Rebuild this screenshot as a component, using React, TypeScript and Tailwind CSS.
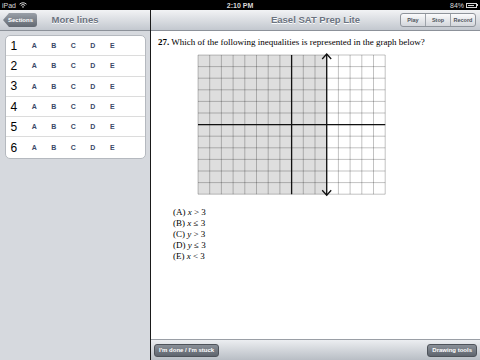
import React from 'react';

const LETTERS = ['A', 'B', 'C', 'D', 'E'];
const ROWS = [1, 2, 3, 4, 5, 6];
const CHOICES = [
  { label: '(A)', v: 'x', op: '>' },
  { label: '(B)', v: 'x', op: '≤' },
  { label: '(C)', v: 'y', op: '>' },
  { label: '(D)', v: 'y', op: '≤' },
  { label: '(E)', v: 'x', op: '<' },
];

const StatusBar = () => (
  <div className="flex h-[10px] items-center justify-between bg-black px-[2px] font-['Liberation_Sans',sans-serif] text-[7px] leading-none text-[#d8d8d8]">
    <div className="flex w-[60px] items-center gap-[3px]">
      <span>iPad</span>
      <svg width="8" height="6" viewBox="0 0 8 6">
        <path d="M0.5 2.2 A5 5 0 0 1 7.5 2.2" stroke="#d8d8d8" strokeWidth="1" fill="none" />
        <path d="M1.8 3.5 A3.2 3.2 0 0 1 6.2 3.5" stroke="#d8d8d8" strokeWidth="1" fill="none" />
        <path d="M4 6 L2.9 4.8 A1.6 1.6 0 0 1 5.1 4.8 Z" fill="#d8d8d8" />
      </svg>
    </div>
    <span className="font-bold">2:10 PM</span>
    <div className="flex w-[60px] items-center justify-end gap-[2px]">
      <span>84%</span>
      <div className="flex items-center">
        <div className="h-[5px] w-[11px] border border-[#d8d8d8] p-[1px]">
          <div className="h-full w-[80%] bg-[#d8d8d8]" />
        </div>
        <div className="h-[2px] w-[1px] bg-[#d8d8d8]" />
      </div>
    </div>
  </div>
);

const Graph = () => {
  const x0 = 1;
  const y0 = 3;
  const cw = 11.7;
  const ch = 11.6;
  const cols = 16;
  const rows = 12;
  const w = cw * cols;
  const h = ch * rows;
  const bx = x0 + cw * 11;
  return (
    <svg width="190" height="146" viewBox="0 0 190 146">
      <rect x={x0} y={y0} width={w} height={h} fill="#ffffff" />
      <rect x={x0} y={y0} width={cw * 11} height={h} fill="#dedede" />
      {Array.from({ length: cols + 1 }, (_, i) => (
        <line key={`v${i}`} x1={x0 + i * cw} y1={y0} x2={x0 + i * cw} y2={y0 + h} stroke="#000" strokeOpacity="0.24" strokeWidth="1" />
      ))}
      {Array.from({ length: rows + 1 }, (_, i) => (
        <line key={`h${i}`} x1={x0} y1={y0 + i * ch} x2={x0 + w} y2={y0 + i * ch} stroke="#000" strokeOpacity="0.24" strokeWidth="1" />
      ))}
      <line x1={x0} y1={y0 + 6 * ch} x2={x0 + w} y2={y0 + 6 * ch} stroke="#111" strokeWidth="1.3" />
      <line x1={x0 + 8 * cw} y1={y0} x2={x0 + 8 * cw} y2={y0 + h} stroke="#111" strokeWidth="1.3" />
      <line x1={bx} y1={y0 - 1} x2={bx} y2={y0 + h + 1} stroke="#111" strokeWidth="1.3" />
      <path d={`M${bx - 4.5} ${y0 + 4} L${bx} ${y0 - 1} L${bx + 4.5} ${y0 + 4}`} stroke="#111" strokeWidth="1.3" fill="none" />
      <path d={`M${bx - 4.5} ${y0 + h - 4} L${bx} ${y0 + h + 1} L${bx + 4.5} ${y0 + h - 4}`} stroke="#111" strokeWidth="1.3" fill="none" />
    </svg>
  );
};

const LeftPane = () => (
  <div className="flex w-[150px] flex-col bg-[#d6d9de]">
    <div className="grid h-[21px] grid-cols-[1fr_auto_1fr] items-center border-b border-[#8c9199] bg-gradient-to-b from-[#f2f3f5] to-[#c3c8cf] px-[3px]">
      <div className="justify-self-start">
        <div className="flex h-[14px] items-center pl-[5px] pr-[4px] [clip-path:polygon(6px_0,100%_0,100%_100%,6px_100%,0_50%)] rounded-r-[3px] bg-gradient-to-b from-[#9aa0a8] to-[#626871] font-['Liberation_Sans',sans-serif] text-[6px] font-bold text-white">
          Sections
        </div>
      </div>
      <span className="font-['Liberation_Sans',sans-serif] text-[9.5px] font-bold text-[#6b7380] [text-shadow:0_1px_0_#fff]">
        More lines
      </span>
      <div />
    </div>
    <div className="mx-[4.5px] mt-[4px] overflow-hidden rounded-[5px] border border-[#b5b9bf] bg-white">
      {ROWS.map((n, i) => (
        <div
          key={n}
          className={`flex h-[20.3px] items-center font-['Liberation_Sans',sans-serif] ${i < ROWS.length - 1 ? 'border-b border-[#dcdcdc]' : ''}`}
        >
          <span className="w-[19px] pl-[5px] text-[12px] leading-none text-black">{n}</span>
          {LETTERS.map((l) => (
            <span key={l} className="w-[19.5px] text-center text-[7px] font-bold leading-none text-[#3a4868]">
              {l}
            </span>
          ))}
        </div>
      ))}
    </div>
  </div>
);

const RightPane = () => (
  <div className="flex flex-1 flex-col bg-white">
    <div className="relative flex h-[21px] items-center justify-center border-b border-[#8c9199] bg-gradient-to-b from-[#f2f3f5] to-[#c3c8cf]">
      <span className="font-['Liberation_Sans',sans-serif] text-[9.5px] font-bold text-[#6b7380] [text-shadow:0_1px_0_#fff]">
        Easel SAT Prep Lite
      </span>
      <div className="absolute right-[4px] top-[3px] flex h-[14px] overflow-hidden rounded-[3px] border border-[#8f949b] bg-gradient-to-b from-[#fbfbfc] to-[#d3d6db] font-['Liberation_Sans',sans-serif] text-[5.5px] font-bold text-[#4d535b]">
        <span className="flex w-[25px] items-center justify-center border-r border-[#9ea3aa]">Play</span>
        <span className="flex w-[25px] items-center justify-center border-r border-[#9ea3aa]">Stop</span>
        <span className="flex w-[24px] items-center justify-center">Record</span>
      </div>
    </div>
    <div className="flex flex-1 flex-col font-['Liberation_Serif',serif] text-black">
      <p className="pl-[7px] pt-[6px] text-[9px] leading-[11px]">
        <span className="font-bold">27.</span> Which of the following inequalities is represented in the graph below?
      </p>
      <div className="ml-[46px] mt-[4px]">
        <Graph />
      </div>
      <div className="ml-[22px] mt-[9px] flex flex-col text-[9px] leading-[11px]">
        {CHOICES.map((c) => (
          <span key={c.label}>
            {c.label} <i>{c.v}</i> {c.op} 3
          </span>
        ))}
      </div>
    </div>
    <div className="flex h-[21px] items-center justify-between border-t border-[#9a9fa6] bg-gradient-to-b from-[#eceef1] to-[#b9bec5] px-[3px] font-['Liberation_Sans',sans-serif] text-[6px] font-bold text-white">
      <span className="flex h-[13px] items-center rounded-[3px] border border-[#4e535a] bg-gradient-to-b from-[#8a9098] to-[#5f656e] px-[4px]">
        I'm done / I'm stuck
      </span>
      <span className="flex h-[13px] items-center rounded-[3px] border border-[#4e535a] bg-gradient-to-b from-[#8a9098] to-[#5f656e] px-[4px]">
        Drawing tools
      </span>
    </div>
  </div>
);

export default function App() {
  return (
    <div className="flex h-[360px] w-[480px] flex-col overflow-hidden">
      <StatusBar />
      <div className="flex flex-1">
        <LeftPane />
        <div className="w-px bg-[#1a1a1a]" />
        <RightPane />
      </div>
    </div>
  );
}
